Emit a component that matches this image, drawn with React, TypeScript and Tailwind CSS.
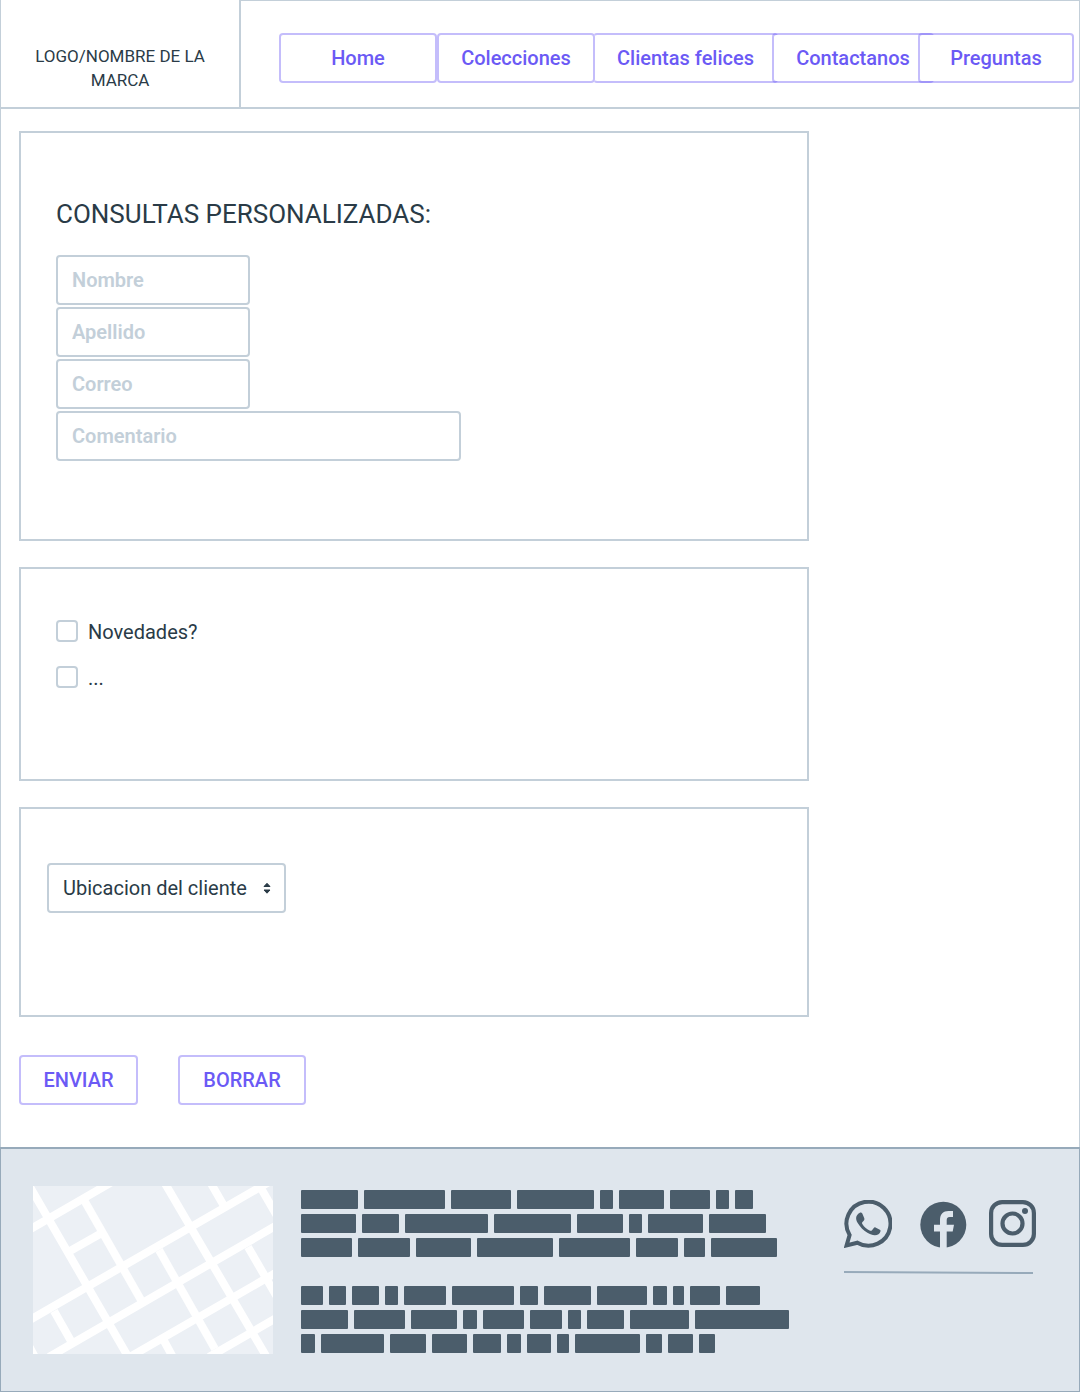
import React from "react";

const navItems = [
  { label: "Home", box: "w-[158px]" },
  { label: "Colecciones", box: "w-[158px]" },
  { label: "Clientas felices", box: "w-[185px] -ml-0.5 border-l-transparent" },
  { label: "Contactanos", box: "w-[162px] -ml-1.5" },
  { label: "Preguntas", box: "w-[156px] -ml-4" },
];

const fields = [
  { id: "nombre", label: "Nombre", type: "text", box: "w-[194px]" },
  { id: "apellido", label: "Apellido", type: "text", box: "w-[194px]" },
  { id: "correo", label: "Correo", type: "email", box: "w-[194px]" },
  { id: "comentario", label: "Comentario", type: "text", box: "w-[405px]" },
];

const options = [
  { id: "novedades", label: "Novedades?" },
  { id: "otros", label: "..." },
];

// Word widths of the placeholder copy, one list per line.
const paragraphs = [
  [
    [57, 81, 60, 77, 13, 45, 40, 13, 18],
    [55, 37, 83, 77, 46, 13, 55, 57],
    [51, 52, 55, 76, 71, 42, 21, 66],
  ],
  [
    [22, 17, 27, 13, 42, 62, 18, 47, 50, 14, 11, 30, 34],
    [47, 51, 46, 14, 41, 32, 13, 37, 59, 94],
    [14, 63, 36, 35, 28, 14, 24, 12, 65, 16, 25, 16],
  ],
];

const outline =
  "flex h-[50px] items-center justify-center rounded border-2 border-[#6b5af5]/40 bg-white bg-clip-padding text-xl font-medium text-[#6b5af5]";

function Panel({ className, children }: { className: string; children: React.ReactNode }) {
  return <section className={"border-2 border-[#c3cfd9] " + className}>{children}</section>;
}

function StreetMap() {
  return (
    <svg viewBox="0 0 240 168" className="h-[168px] w-[240px] shrink-0 bg-[#ecf0f5]" role="img" aria-label="Mapa">
      <g stroke="#fff" strokeWidth="8" fill="none">
        <path d="M-6 45 78 -3.5" />
        <path d="M-6 135.5 236 -4" />
        <path d="M16 171 246 38" />
        <path d="M95 172 246 85" />
        <path d="M176 171 246 130.5" />
        <path d="M37 65 67 48" />
        <path d="M-7 -6 97 174" />
        <path d="M51 14 108 114" />
        <path d="M126 64 182 163" />
        <path d="M130 -6 236 175" />
        <path d="M176 -6 191 20" />
        <path d="M229 4 244 30" />
        <path d="M215 61 244 111" />
        <path d="M21 125 38 155" />
        <path d="M130 153 142 175" />
        <path d="M-4 160 3 173" />
      </g>
    </svg>
  );
}

function WhatsAppIcon() {
  return (
    <svg viewBox="0 0 48 48" className="size-12" aria-hidden="true">
      <path
        d="M2.600 45.400 5.600 35A22 22 0 1 1 13.400 42.700Z"
        fill="none"
        stroke="currentColor"
        strokeWidth="4"
        strokeLinejoin="miter"
      />
      <path
        d="M15.500 12.900c1-.6 2.200-.5 2.800.6l2 4.800c.3.8.1 1.500-.4 2.100l-1.600 1.900c-.4.500-.4 1 0 1.600 2 3.100 4.500 5.300 7.800 6.800.7.300 1.200.2 1.700-.3l2-2.500c.5-.6 1-.7 1.700-.4l4.300 2.200c.7.4.9.9.7 1.600-.6 2.600-3 4-5.800 3.900-2.200-.1-4.700-1-7.300-2.500-4.200-2.400-7.300-5.800-9.700-9.700-2.500-4.100-2-8 1.800-10.100Z"
        fill="currentColor"
      />
    </svg>
  );
}

function FacebookIcon() {
  return (
    <svg viewBox="0 0 48 48" className="size-12" aria-hidden="true">
      <circle cx="24.300" cy="24.700" r="23" fill="currentColor" />
      <path
        d="M21 48V31.400h-6V24.700h6v-4.700c0-6 3.300-9 8.500-9H34v6h-3.200c-2.500 0-3.100 1.300-3.100 3.400v4.300H35l-1.300 6.700h-6V48Z"
        fill="#dfe6ed"
      />
    </svg>
  );
}

function InstagramIcon() {
  return (
    <svg viewBox="0 0 47 47" className="size-[47px]" aria-hidden="true">
      <rect x="2.100" y="2.100" width="42.800" height="42.800" rx="11" fill="none" stroke="currentColor" strokeWidth="4.200" />
      <circle cx="23.500" cy="23.500" r="10" fill="none" stroke="currentColor" strokeWidth="4.200" />
      <circle cx="36" cy="11" r="3" fill="currentColor" />
    </svg>
  );
}

export default function App() {
  return (
    <div className="flex min-h-screen flex-col bg-white font-['Roboto',sans-serif] text-[#2a3b47]">
      <header className="flex h-[109px] border-x border-b-2 border-[#c3cfd9]">
        <div className="flex w-60 shrink-0 justify-center border-r-2 border-[#c3cfd9] px-8 pt-11">
          <p className="text-center text-[17px] leading-6">LOGO/NOMBRE DE LA MARCA</p>
        </div>
        <nav className="flex flex-1 border-t border-[#c3cfd9] pt-8 pl-[38px]">
          {navItems.map((item) => (
            <a key={item.label} href="#" className={outline + " shrink-0 " + item.box}>
              {item.label}
            </a>
          ))}
        </nav>
      </header>

      <main className="flex-1 border-x border-[#c3cfd9] px-[18px] pt-[22px] pb-[42px]">
        <form onSubmit={(e) => e.preventDefault()}>
          <div className="flex max-w-[790px] flex-col gap-[26px]">
            <Panel className="pt-[65px] pb-[78px] pl-[35px]">
              <h1 className="mb-[25px] text-[26px] leading-8">CONSULTAS PERSONALIZADAS:</h1>
              <div className="flex flex-col gap-0.5">
                {fields.map((f) => (
                  <input
                    key={f.id}
                    id={f.id}
                    type={f.type}
                    aria-label={f.label}
                    placeholder={f.label}
                    className={
                      "h-[50px] rounded border-2 border-[#c3cfd9] px-3.5 text-xl font-semibold placeholder:text-[#c3cfd9] " +
                      f.box
                    }
                  />
                ))}
              </div>
            </Panel>

            <Panel className="flex flex-col gap-6 pt-[51px] pb-[91px] pl-[35px]">
              {options.map((o) => (
                <div key={o.id} className="flex h-[22px] items-start gap-2.5">
                  <input
                    id={o.id}
                    type="checkbox"
                    className="size-[22px] appearance-none rounded border-2 border-[#c3cfd9] checked:bg-[#6b5af5]"
                  />
                  <label htmlFor={o.id} className="text-xl leading-6">
                    {o.label}
                  </label>
                </div>
              ))}
            </Panel>

            <Panel className="pt-[54px] pb-[102px] pl-[26px]">
              <div className="relative w-[239px]">
                <select
                  aria-label="Ubicacion del cliente"
                  className="h-[50px] w-full appearance-none rounded border-2 border-[#c3cfd9] bg-white pl-3.5 text-xl"
                >
                  <option>Ubicacion del cliente</option>
                </select>
                <svg
                  viewBox="0 0 8 12"
                  className="pointer-events-none absolute top-[19px] right-[15px] h-3 w-2"
                  aria-hidden="true"
                >
                  <path
                    d="M1 4.500 4 1.300 7 4.500ZM1 8 4 11.200 7 8Z"
                    fill="currentColor"
                    stroke="currentColor"
                    strokeWidth="1"
                    strokeLinejoin="round"
                  />
                </svg>
              </div>
            </Panel>
          </div>

          <div className="mt-[38px] flex gap-10">
            <button type="submit" className={outline + " w-[119px]"}>
              ENVIAR
            </button>
            <button type="reset" className={outline + " w-32"}>
              BORRAR
            </button>
          </div>
        </form>
      </main>

      <footer className="flex border border-t-2 border-[#97aaba] bg-[#dfe6ed] px-8 pt-[37px] pb-[37px] text-[#4b5d6b]">
        <StreetMap />
        <div className="ml-7 flex w-[488px] shrink-0 flex-col gap-[29px] pt-1">
          {paragraphs.map((lines, p) => (
            <div key={p} className="flex flex-col gap-[5px]">
              {lines.map((words, l) => (
                <div key={l} className="flex gap-1.5">
                  {words.map((width, w) => (
                    <span key={w} className="h-[19px] shrink-0 rounded-[1px] bg-[#4b5d6b]" style={{ width }} />
                  ))}
                </div>
              ))}
            </div>
          ))}
        </div>
        <div className="ml-[55px] pt-3.5">
          <div className="flex">
            <a href="#" aria-label="WhatsApp">
              <WhatsAppIcon />
            </a>
            <a href="#" aria-label="Facebook" className="ml-[27px]">
              <FacebookIcon />
            </a>
            <a href="#" aria-label="Instagram" className="ml-[22px]">
              <InstagramIcon />
            </a>
          </div>
          <svg viewBox="0 0 189 4" className="mt-[22px] h-1 w-[189px]" aria-hidden="true">
            <path d="M0 2 189 3" stroke="#97aaba" strokeWidth="2" />
          </svg>
        </div>
      </footer>
    </div>
  );
}
